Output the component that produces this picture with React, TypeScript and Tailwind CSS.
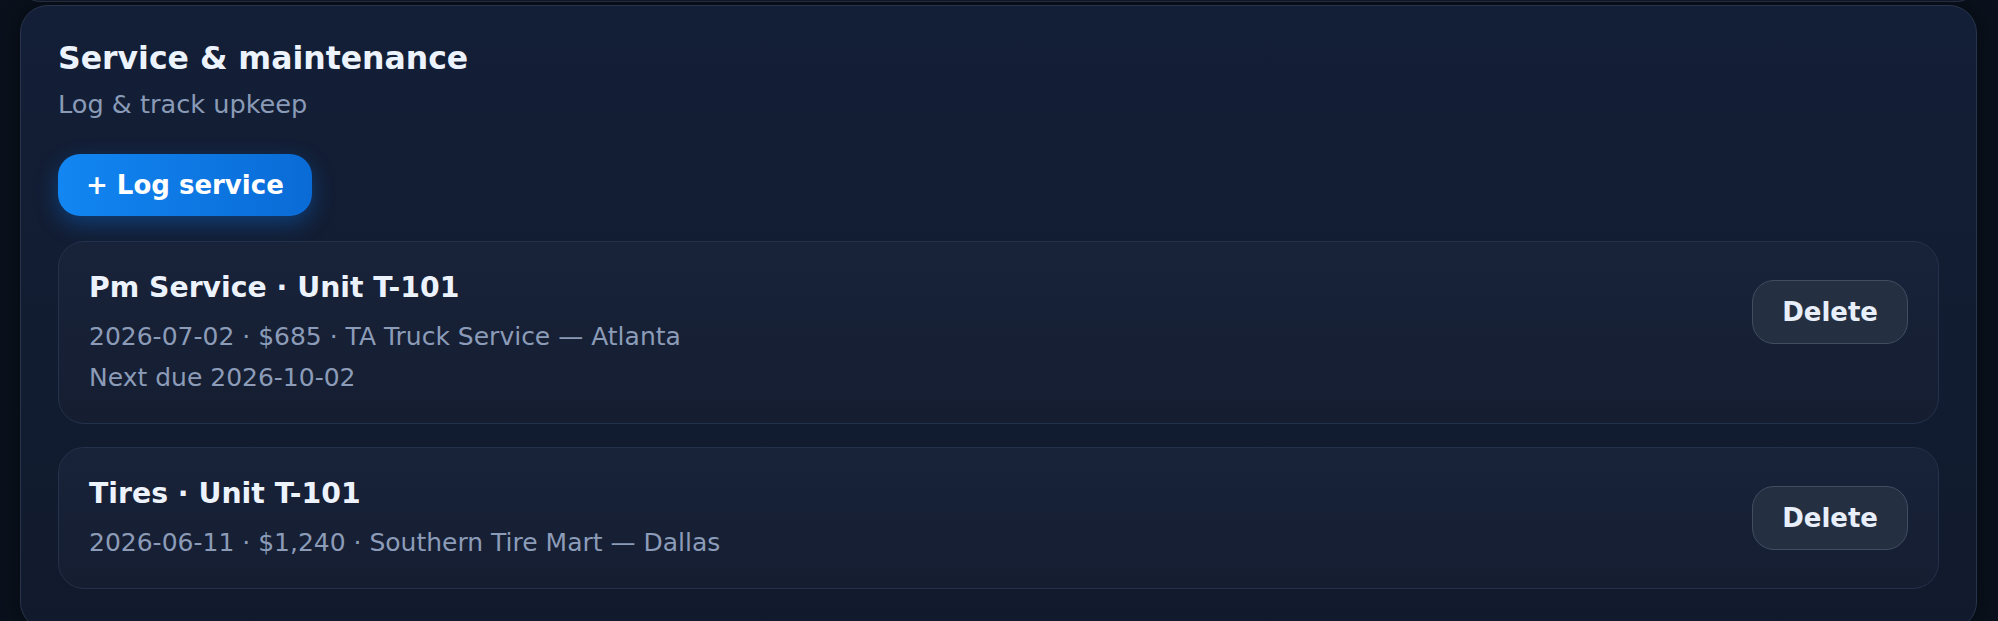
import React from "react";

type Entry = { title: string; meta: string; next?: string };

const entries: Entry[] = [
  {
    title: "Pm Service · Unit T-101",
    meta: "2026-07-02 · $685 · TA Truck Service — Atlanta",
    next: "Next due 2026-10-02",
  },
  {
    title: "Tires · Unit T-101",
    meta: "2026-06-11 · $1,240 · Southern Tire Mart — Dallas",
  },
];

function EntryCard({ e }: { e: Entry }) {
  return (
    <div className="rounded-[26px] border border-[#24314a] bg-gradient-to-b from-[#182239] to-[#151e31] px-[30px] py-[28px]">
      <div className="flex items-center justify-between">
        <div className="flex flex-col gap-[14px]">
          <div className="text-[28.3px] leading-[36px] font-bold text-[#edf3fc]">{e.title}</div>
          <div className="text-[25px] leading-[34px] text-[#8c9cb8]">{e.meta}</div>
        </div>
        <button className="rounded-[22px] border border-[#414d61] bg-[#252f42] px-[29px] py-[15px] text-[26px] leading-[32px] font-bold text-[#e8effb]">
          Delete
        </button>
      </div>
      {e.next && (
        <div className="mt-[7px] text-[25px] leading-[34px] text-[#8c9cb8]">{e.next}</div>
      )}
    </div>
  );
}

export default function App() {
  return (
    <div className="h-[621px] w-full overflow-hidden bg-[#0a111c] pl-[20px] pr-[21px] font-['DejaVu_Sans',sans-serif]">
      <div className="-mt-[38px] h-[40px] rounded-[28px] border border-[#2b364b] bg-[#121b2d]" />
      <div className="mt-[3px] rounded-[28px] border border-[#27344c] bg-gradient-to-b from-[#131f37] to-[#111a2c] px-[37px] pt-[32px] pb-[40px] shadow-[0_0_24px_rgba(0,0,0,0.45)]">
        <div className="text-[31.5px] leading-[40px] font-bold text-[#edf3fc]">Service &amp; maintenance</div>
        <div className="mt-[10px] text-[25.6px] leading-[32px] text-[#8a9bb7]">Log &amp; track upkeep</div>
        <button className="mt-[34px] rounded-[22px] bg-gradient-to-r from-[#1286f2] to-[#0a6bd6] px-[28px] py-[15px] text-[26px] leading-[32px] font-bold text-white shadow-[0_8px_22px_rgba(12,120,240,0.35)]">
          + Log service
        </button>
        <div className="mt-[25px] flex flex-col gap-[23px]">
          {entries.map((e) => (
            <EntryCard key={e.title} e={e} />
          ))}
        </div>
      </div>
    </div>
  );
}
